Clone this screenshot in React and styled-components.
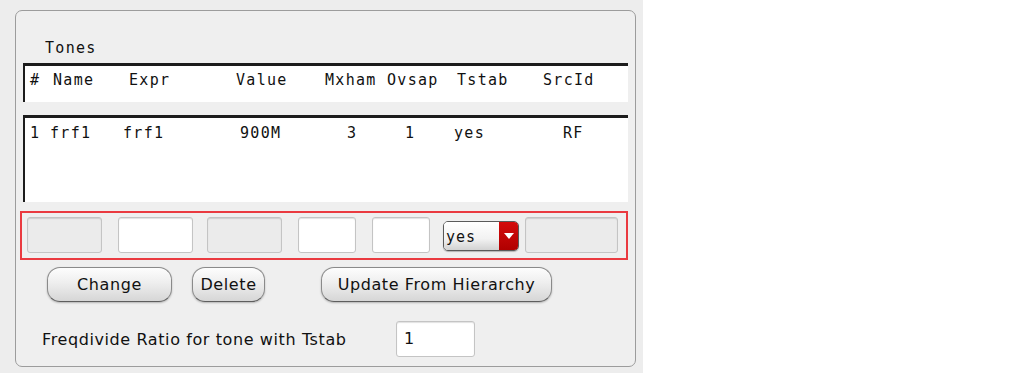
import React from 'react'
import styled, { createGlobalStyle } from 'styled-components'

const GlobalStyle = createGlobalStyle`
  html, body {
    margin: 0;
    padding: 0;
    background: #ffffff;
  }
`

const mono = `"DejaVu Sans Mono", "Liberation Mono", monospace`
const sans = `"DejaVu Sans", "Liberation Sans", sans-serif`

const Page = styled.div`
  width: 643px;
  height: 373px;
  box-sizing: border-box;
  padding: 10px 7px 6px 15px;
  background: #ededed;
`

const Panel = styled.div`
  height: 357px;
  box-sizing: border-box;
  border: 1px solid #9c9c9c;
  border-radius: 7px;
  padding: 29px 7px 9px 7px;
  background: #efefef;
  display: flex;
  flex-direction: column;
`

const Caption = styled.div`
  font-family: ${mono};
  font-size: 15px;
  line-height: 16px;
  letter-spacing: 1.3px;
  color: #111;
  padding-left: 22px;
`

const ListBox = styled.div`
  box-sizing: border-box;
  height: ${(p) => p.$h}px;
  margin-top: ${(p) => p.$mt}px;
  background: #fff;
  border-top: 3px solid #1c1c1c;
  border-left: 2px solid #1c1c1c;
  padding: ${(p) => p.$pt}px 0 0 5px;
`

const Columns = styled.div`
  display: grid;
  grid-template-columns: 23px 76px 107px 89px 62px 70px 86px 1fr;
  font-family: ${mono};
  font-size: 15px;
  line-height: 16px;
  letter-spacing: 1.3px;
  color: #111;
  white-space: pre;
`

const Cell = styled.span`
  margin-left: ${(p) => p.$dx || 0}px;
`

const EditBar = styled.div`
  margin: 9px 0 0 -3px;
  height: 50px;
  box-sizing: border-box;
  border: 2px solid #ea3a40;
  padding: 0 5px;
  display: flex;
  align-items: center;
`

const Field = styled.div`
  box-sizing: border-box;
  width: ${(p) => p.$w}px;
  height: 36px;
  margin-left: ${(p) => p.$ml || 0}px;
  border: 1px solid #c4c4c4;
  border-radius: 3px;
  background: ${(p) => (p.$disabled ? '#ebebeb' : '#ffffff')};
  box-shadow: inset 0 1px 1px rgba(0, 0, 0, 0.12);
  font-family: ${sans};
  font-size: 16px;
  line-height: 34px;
  padding-left: 7px;
  color: #111;
`

const Select = styled.div`
  box-sizing: border-box;
  width: 76px;
  height: 30px;
  margin-left: 13px;
  margin-top: 2px;
  display: flex;
  border: 1px solid #5a5a5a;
  border-radius: 5px;
  overflow: hidden;
  box-shadow: 0 1px 1px rgba(0, 0, 0, 0.25);
`

const SelectValue = styled.div`
  flex: 1;
  background: linear-gradient(#ffffff, #f2f2f2 60%, #d2d2d2);
  font-family: ${mono};
  font-size: 15px;
  line-height: 30px;
  letter-spacing: 1px;
  padding-left: 2px;
  color: #111;
`

const SelectArrow = styled.div`
  width: 19px;
  background: linear-gradient(#d40c0c, #b00000);
  display: flex;
  align-items: center;
  justify-content: center;
  &::after {
    content: '';
    border-left: 5px solid transparent;
    border-right: 5px solid transparent;
    border-top: 6px solid #fff;
  }
`

const ButtonRow = styled.div`
  margin-top: 7px;
  display: flex;
  padding-left: 24px;
`

const Button = styled.button`
  box-sizing: border-box;
  width: ${(p) => p.$w}px;
  height: 35px;
  margin-left: ${(p) => p.$ml || 0}px;
  border: 1px solid #8a8a8a;
  border-bottom-color: #5e5e5e;
  border-radius: 13px;
  background: linear-gradient(#fdfdfd, #eeeeee 45%, #d6d6d6);
  box-shadow: 0 1px 2px rgba(0, 0, 0, 0.25);
  font-family: ${sans};
  font-size: 16px;
  letter-spacing: 0.6px;
  color: #111;
  padding: 0;
  cursor: pointer;
`

const RatioRow = styled.div`
  margin-top: 19px;
  display: flex;
  align-items: center;
  padding-left: 19px;
`

const RatioLabel = styled.span`
  width: 354px;
  font-family: ${sans};
  font-size: 16px;
  letter-spacing: 0.6px;
  color: #111;
`

const headers = ['#', 'Name', 'Expr', 'Value', 'Mxham', 'Ovsap', 'Tstab', 'SrcId']
const tone = [
  ['1', 0],
  ['frf1', -3],
  ['frf1', -6],
  ['900M', 4],
  ['3', 22],
  ['1', 18],
  ['yes', -3],
  ['RF', 20],
]

export default function App() {
  return (
    <>
      <GlobalStyle />
      <Page>
        <Panel>
          <Caption>Tones</Caption>
          <ListBox $h={39} $mt={7} $pt={6}>
            <Columns>
              {headers.map((h) => (
                <Cell key={h}>{h}</Cell>
              ))}
            </Columns>
          </ListBox>
          <ListBox $h={88} $mt={13} $pt={7}>
            <Columns>
              {tone.map(([v, dx], i) => (
                <Cell key={i} $dx={dx}>{v}</Cell>
              ))}
            </Columns>
          </ListBox>
          <EditBar>
            <Field $w={75} $disabled />
            <Field $w={75} $ml={16} />
            <Field $w={75} $ml={14} $disabled />
            <Field $w={58} $ml={16} />
            <Field $w={58} $ml={16} />
            <Select>
              <SelectValue>yes</SelectValue>
              <SelectArrow />
            </Select>
            <Field $w={93} $ml={6} $disabled />
          </EditBar>
          <ButtonRow>
            <Button $w={125}>Change</Button>
            <Button $w={73} $ml={20}>Delete</Button>
            <Button $w={231} $ml={56}>Update From Hierarchy</Button>
          </ButtonRow>
          <RatioRow>
            <RatioLabel>Freqdivide Ratio for tone with Tstab</RatioLabel>
            <Field $w={79}>1</Field>
          </RatioRow>
        </Panel>
      </Page>
    </>
  )
}
